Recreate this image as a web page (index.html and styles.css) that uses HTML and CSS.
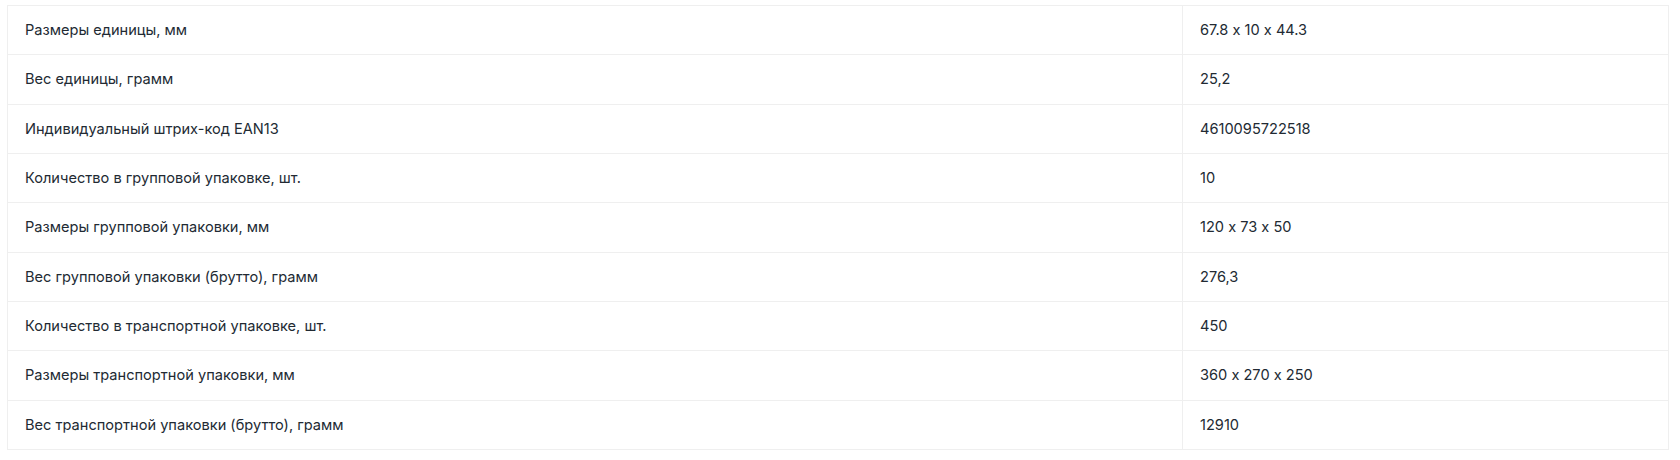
FILE: index.html
```html
<!doctype html>
<html lang="ru">
  <head>
    <meta charset="UTF-8" />
    <meta name="viewport" content="width=device-width, initial-scale=1.0" />
    <title>Характеристики</title>
    <link rel="stylesheet" href="styles.css">
  </head>
  <body>
    <table class="specs">
      <colgroup>
        <col class="name-col" />
        <col />
      </colgroup>
      <tbody>
        <tr><td>Размеры единицы, мм</td><td>67.8 x 10 x 44.3</td></tr>
        <tr><td>Вес единицы, грамм</td><td>25,2</td></tr>
        <tr><td>Индивидуальный штрих-код EAN13</td><td>4610095722518</td></tr>
        <tr><td>Количество в групповой упаковке, шт.</td><td>10</td></tr>
        <tr><td>Размеры групповой упаковки, мм</td><td>120 x 73 x 50</td></tr>
        <tr><td>Вес групповой упаковки (брутто), грамм</td><td>276,3</td></tr>
        <tr><td>Количество в транспортной упаковке, шт.</td><td>450</td></tr>
        <tr><td>Размеры транспортной упаковки, мм</td><td>360 x 270 x 250</td></tr>
        <tr><td>Вес транспортной упаковки (брутто), грамм</td><td>12910</td></tr>
      </tbody>
    </table>
  </body>
</html>
```

FILE: styles.css
```css
* {
  box-sizing: border-box;
}

body {
  margin: 0;
  padding: 5px 11px 0 7px;
  background: #fff;
  font-family: Inter, "Noto Sans", sans-serif;
  color: #222a33;
}

.specs {
  width: 100%;
  border-collapse: collapse;
  table-layout: fixed;
  font-size: 14.6px;
  font-feature-settings: "calt" 0;
}

.specs .name-col {
  width: 1175px;
}

.specs tr {
  height: 49.33px;
}

.specs td {
  padding: 0 17px;
  border: 1px solid #efefef;
  vertical-align: middle;
  line-height: 18px;
}
```
